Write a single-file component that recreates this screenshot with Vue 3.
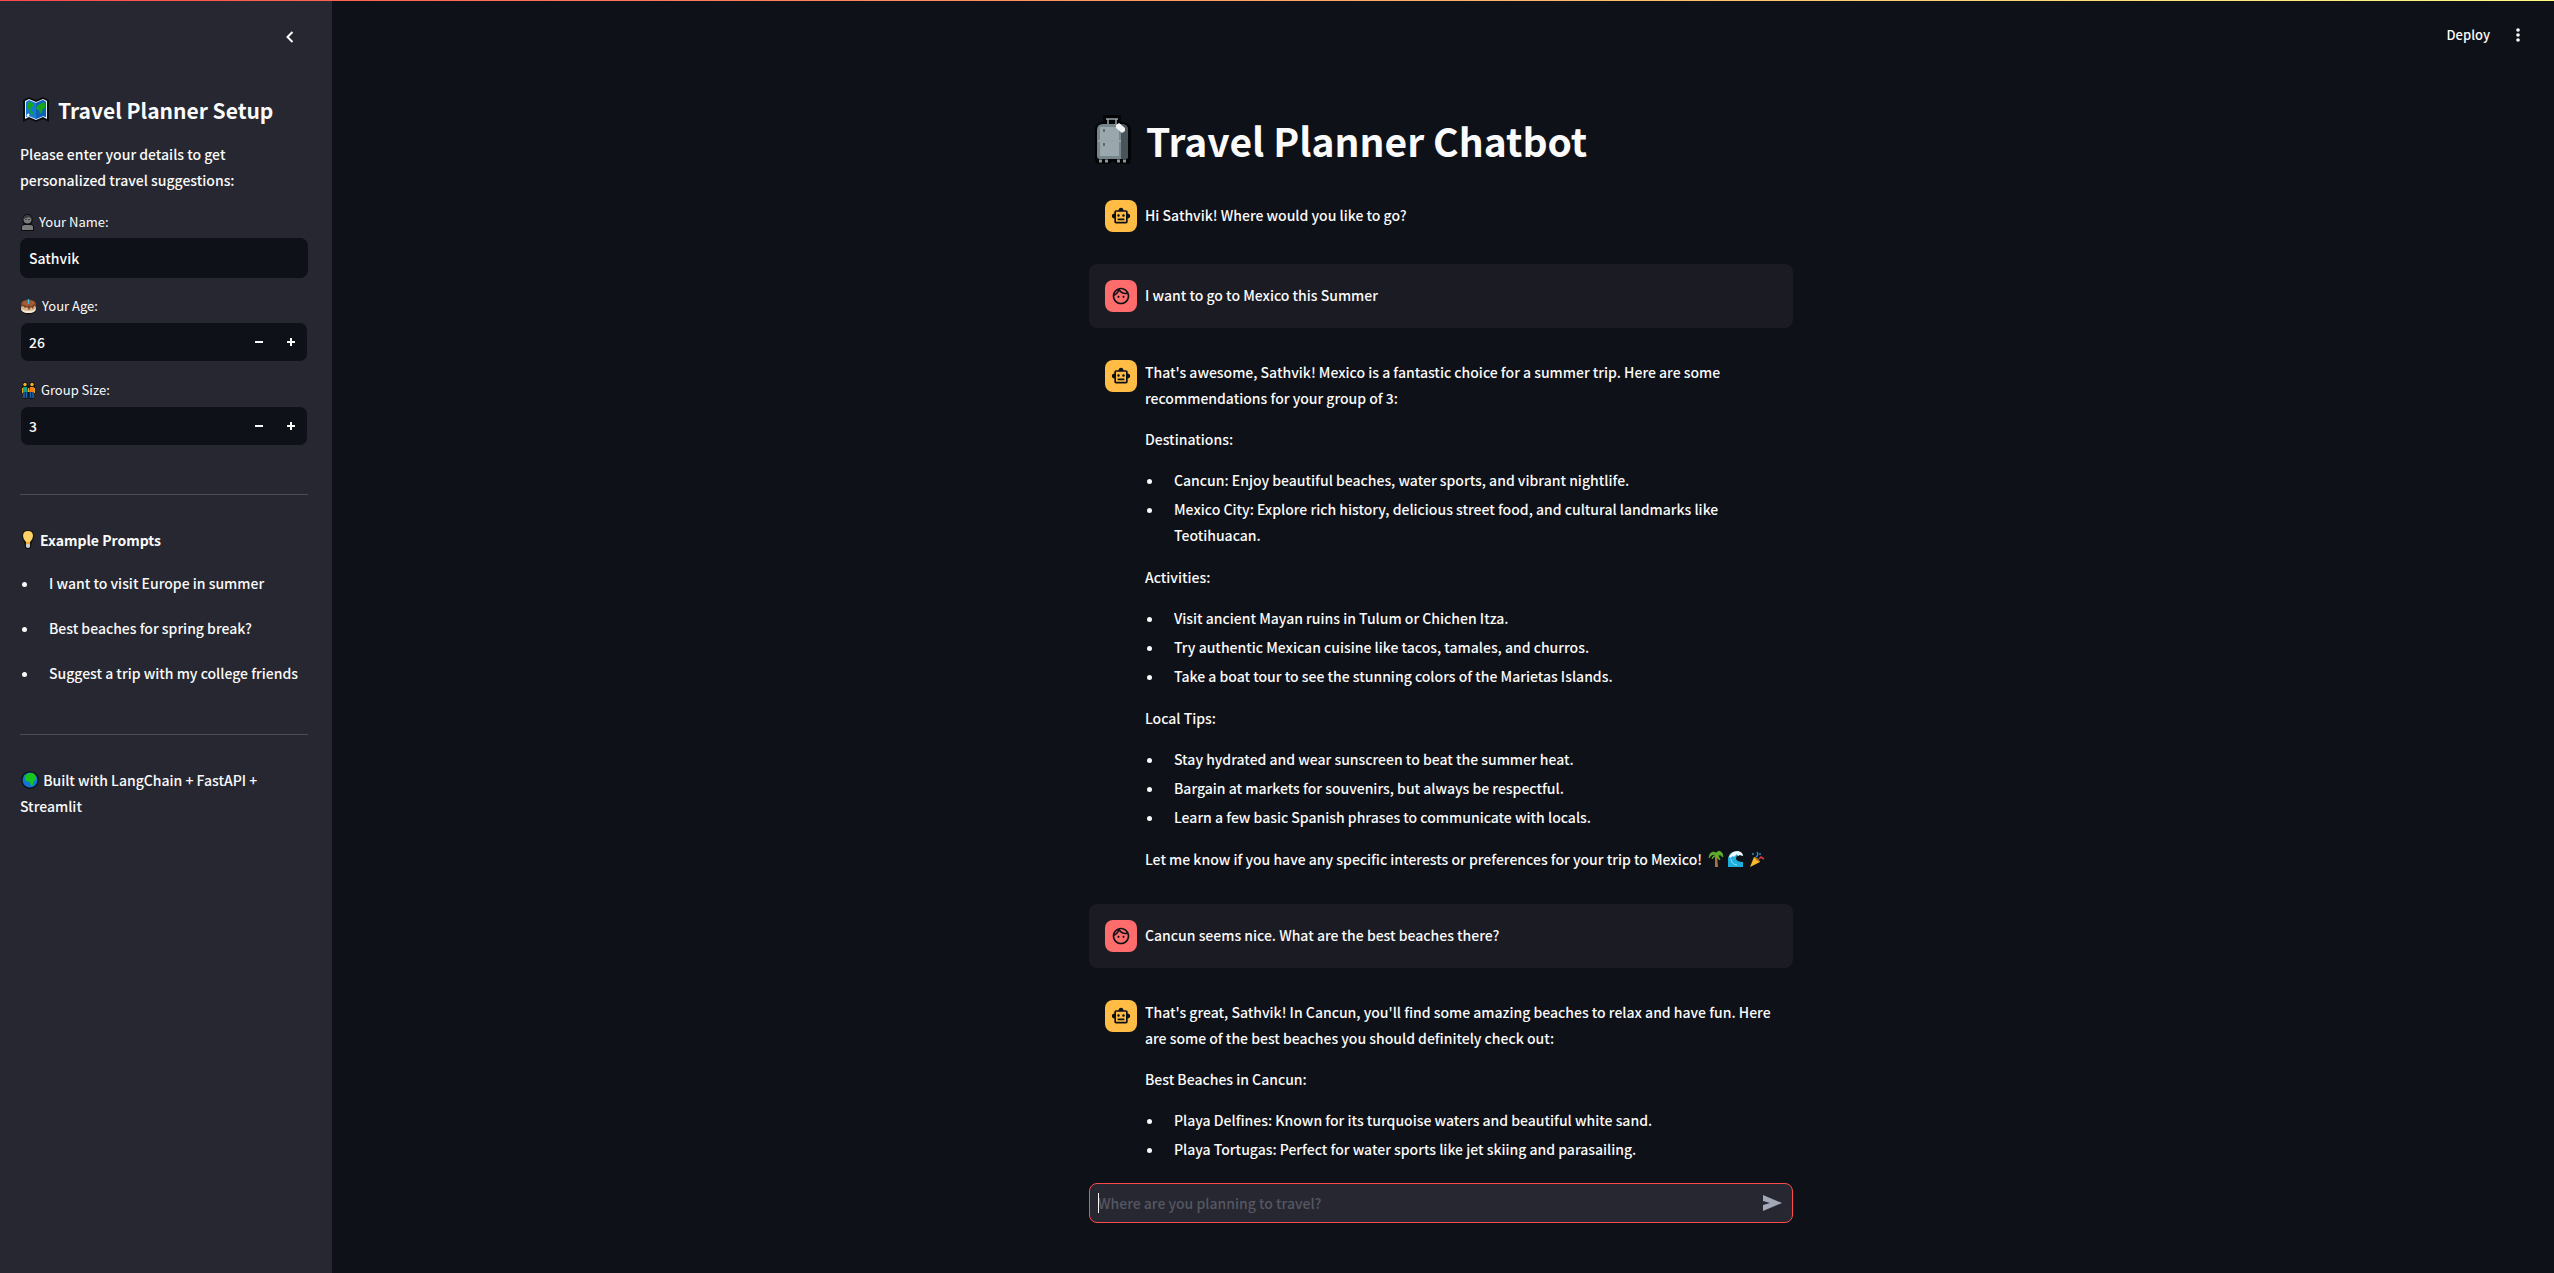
<script setup>
import { ref } from 'vue'

const name = ref('Sathvik')
const age = ref(26)
const group = ref(3)
const prompts = [
  'I want to visit Europe in summer',
  'Best beaches for spring break?',
  'Suggest a trip with my college friends',
]
const messages = [
  { role: 'assistant', blocks: [{ p: 'Hi Sathvik! Where would you like to go?' }] },
  { role: 'user', blocks: [{ p: 'I want to go to Mexico this Summer' }] },
  {
    role: 'assistant',
    blocks: [
      { p: "That's awesome, Sathvik! Mexico is a fantastic choice for a summer trip. Here are some recommendations for your group of 3:" },
      { p: 'Destinations:' },
      { ul: [
        'Cancun: Enjoy beautiful beaches, water sports, and vibrant nightlife.',
        'Mexico City: Explore rich history, delicious street food, and cultural landmarks like Teotihuacan.',
      ] },
      { p: 'Activities:' },
      { ul: [
        'Visit ancient Mayan ruins in Tulum or Chichen Itza.',
        'Try authentic Mexican cuisine like tacos, tamales, and churros.',
        'Take a boat tour to see the stunning colors of the Marietas Islands.',
      ] },
      { p: 'Local Tips:' },
      { ul: [
        'Stay hydrated and wear sunscreen to beat the summer heat.',
        'Bargain at markets for souvenirs, but always be respectful.',
        'Learn a few basic Spanish phrases to communicate with locals.',
      ] },
      { p: 'Let me know if you have any specific interests or preferences for your trip to Mexico!', emoji: true },
    ],
  },
  { role: 'user', blocks: [{ p: 'Cancun seems nice. What are the best beaches there?' }] },
  {
    role: 'assistant',
    blocks: [
      { p: "That's great, Sathvik! In Cancun, you'll find some amazing beaches to relax and have fun. Here are some of the best beaches you should definitely check out:" },
      { p: 'Best Beaches in Cancun:' },
      { ul: [
        'Playa Delfines: Known for its turquoise waters and beautiful white sand.',
        'Playa Tortugas: Perfect for water sports like jet skiing and parasailing.',
      ] },
    ],
  },
]
</script>

<template>
  <div class="app">
    <div class="rainbow"></div>
    <aside class="sidebar">
      <div class="side-head">
        <button class="icon-btn" aria-label="Collapse sidebar">
          <svg width="20" height="20" viewBox="0 0 20 20"><path d="M12.500 5 7.500 10l5 5" fill="none" stroke="#fafafa" stroke-width="2" /></svg>
        </button>
      </div>
      <h2>
        <svg width="28" height="28" viewBox="0 0 28 28">
          <path d="M1 4 7 1l7 3 7-3 6 3v22l-6-3-7 3-7-3-6 3z" fill="#0b0c10" />
          <path d="M3 5 7 3l7 3 7-3 4 2v18l-4-2-7 3-7-3-4 2z" fill="#e4edf5" />
          <path d="M4 6l3-2 7 3 7-3 3 2v15l-3-1-7 3-7-3-3 1z" fill="#1478d4" />
          <path d="M14 7l7-3 3 2v15l-3-1-7 3z" fill="#0d62b8" />
          <path d="M5 7l3-1 4 2v2l-2 1v1l-2 1 1 2 2 1-1 4-1-1-1-4-2-2-1-3zM15 10l3-2 4-2 1 2v4l-2 1-1 3-2 2-1-4-3-1z" fill="#18a51e" />
          <path d="M5 20l2-2" stroke="#fff" stroke-width="2" />
        </svg>
        <span>Travel Planner Setup</span>
      </h2>
      <p class="intro">Please enter your details to get personalized travel suggestions:</p>

      <div class="field">
        <label for="name">
          <svg width="15" height="17" viewBox="0 0 15 17">
            <path d="M1 17v-4q0-2 3-3Q2 8 2.500 4 4 0 7.500 0T12.500 4q.5 4-1.500 6 3 1 3 3v4z" fill="#0b0c10" />
            <path d="M2 16v-3q0-2 3-2h5q3 0 3 2v3z" fill="#7a7a7a" />
            <circle cx="7.500" cy="5.500" r="4" fill="#7a7a7a" />
            <path d="M3.500 5q0-4 4-4t4 4L9 3z" fill="#3a3a3a" />
            <path d="M5.500 5.500h1M8.500 5.500h1" stroke="#111" />
          </svg>
          Your Name:
        </label>
        <div class="box"><input id="name" v-model="name" type="text" /></div>
      </div>
      <div class="field">
        <label for="age">
          <svg width="18" height="17" viewBox="0 0 18 17">
            <ellipse cx="8.500" cy="10.500" rx="8" ry="6" fill="#15120f" />
            <path d="M1 6v5q1 4 7.500 4T16 11V6z" fill="#d9b48b" />
            <path d="M1 11q1 4 7.500 4T16 11q-3 2-7.500 2T1 11" fill="#f2eadb" />
            <path d="M1 6q0-4 7.500-4T16 6v3l-2-1-1 3-2-2-2 3-2-3-2 1-2-2-2 1z" fill="#7a4327" />
            <ellipse cx="8.500" cy="5" rx="6.500" ry="3" fill="#985b36" />
            <path d="M8.500 1v5" stroke="#40b8dd" stroke-width="1.500" />
            <path d="M4 5h1M12 5h1M6 7h1M11 7h1" stroke="#e7563f" />
          </svg>
          Your Age:
        </label>
        <div class="box number">
          <input id="age" v-model="age" type="text" inputmode="numeric" />
          <button aria-label="Decrease age" @click="age--"><svg width="10" height="10" viewBox="0 0 10 10"><path d="M1 5h8" stroke="#fafafa" stroke-width="2" /></svg></button>
          <button aria-label="Increase age" @click="age++"><svg width="10" height="10" viewBox="0 0 10 10"><path d="M1 5h8M5 1v8" stroke="#fafafa" stroke-width="2" /></svg></button>
        </div>
      </div>
      <div class="field">
        <label for="group">
          <svg width="17" height="17" viewBox="0 0 17 17">
            <path d="M3 0h4l1 4h1l1-4h4l1 5 1 6h-2v6H9l-1-2-1 2H3v-6H1l1-6z" fill="#14151b" />
            <circle cx="5" cy="2.500" r="1.700" fill="#f0b323" /><circle cx="12" cy="2.500" r="1.700" fill="#f0b323" />
            <path d="M3 5h4l1 5H3z" fill="#12a087" /><path d="M10 5h4v5H9z" fill="#f47b16" />
            <path d="M2.500 6v5M14.500 6v5M8.500 6v4" stroke="#e5a91f" />
            <path d="M4 10v6M6.500 10v6M10.500 10v6M13 10v6" stroke="#1d65a6" stroke-width="1.600" />
          </svg>
          Group Size:
        </label>
        <div class="box number">
          <input id="group" v-model="group" type="text" inputmode="numeric" />
          <button aria-label="Decrease group size" @click="group--"><svg width="10" height="10" viewBox="0 0 10 10"><path d="M1 5h8" stroke="#fafafa" stroke-width="2" /></svg></button>
          <button aria-label="Increase group size" @click="group++"><svg width="10" height="10" viewBox="0 0 10 10"><path d="M1 5h8M5 1v8" stroke="#fafafa" stroke-width="2" /></svg></button>
        </div>
      </div>

      <hr />
      <p class="examples">
        <svg width="16" height="20" viewBox="0 0 16 20">
          <path d="M8 0Q2 0 2 6q0 3 2 6l1 5q0 2 3 2t3-2l1-5q2-3 2-6 0-6-6-6" fill="#14130f" />
          <path d="M8 1Q3 1 3 6q0 3 3 6v1h4v-1q3-3 3-6 0-5-5-5" fill="#ffd166" />
          <path d="M6 12h4v2H6z" fill="#eba92d" /><path d="M6 14h4v3q-2 2-4 0z" fill="#c8ccd0" />
        </svg>
        <strong>Example Prompts</strong>
      </p>
      <ul class="prompts">
        <li v-for="p in prompts" :key="p"><span>{{ p }}</span></li>
      </ul>
      <hr />
      <p class="built">
        <svg width="20" height="18" viewBox="0 0 20 18">
          <circle cx="10" cy="9" r="8.700" fill="#0c1017" /><circle cx="10" cy="9" r="7.500" fill="#1276d6" />
          <path d="M6 4l3-2 4 0 3 3v4l-2 1-1 4-2 1-1-4-4-1-1-3zM4 5l1-1v2z" fill="#19c41c" />
        </svg>
        Built with LangChain + FastAPI + Streamlit
      </p>
    </aside>

    <main class="main">
      <header class="toolbar">
        <button class="deploy">Deploy</button>
        <button class="icon-btn" aria-label="Main menu">
          <svg width="20" height="20" viewBox="0 0 20 20" fill="#fafafa"><circle cx="10" cy="5" r="1.800" /><circle cx="10" cy="10" r="1.800" /><circle cx="10" cy="15" r="1.800" /></svg>
        </button>
      </header>
      <section class="chat">
        <h1>
          <svg width="38" height="50" viewBox="0 0 38 50">
            <path d="M9 0h18v7h3q7 2 7 8v25l-1 9H23l-4-3-4 3H3l-2-4V15q0-7 7-8h1z" fill="#020304" />
            <path d="M12 4h12M14 4v6M22 4v6" fill="none" stroke="#9aa4a8" stroke-width="1.500" />
            <path d="M3 15q0-6 6-6h18q7 0 7 6v26q0 3-3 3H6q-3 0-3-3z" fill="#77868b" />
            <path d="M27 9q7 0 7 6v26q0 3-3 3h-4z" fill="#48545a" />
            <path d="M6 12h19v13H6zM6 27h19v14H6z" fill="#9aa7ac" />
            <path d="M4 26h23" stroke="#b9c4c8" /><path d="M10 14v3M10 28v3" stroke="#4c5659" stroke-width="1.500" />
            <path d="M22 10l3-2 6 5v3l-3 2-6-5z" fill="#f1f3f3" />
            <path d="M5 46h3M11 46h3M23 46h3M29 46h3" stroke="#8d979b" stroke-width="3" />
          </svg>
          <span>Travel Planner Chatbot</span>
        </h1>
        <article v-for="(m, i) in messages" :key="i" class="message" :class="m.role">
          <div class="avatar">
            <svg v-if="m.role === 'assistant'" width="20" height="20" viewBox="0 0 24 24" fill="#0e1117">
              <path d="M20 9V7c0-1.100-.9-2-2-2h-3c0-1.660-1.340-3-3-3S9 3.340 9 5H6c-1.100 0-2 .9-2 2v2c-1.660 0-3 1.340-3 3s1.340 3 3 3v4c0 1.100.9 2 2 2h12c1.100 0 2-.9 2-2v-4c1.660 0 3-1.340 3-3s-1.340-3-3-3zm-2 10H6V7h12v12zm-9-6c-.83 0-1.500-.67-1.500-1.500S8.170 10 9 10s1.500.67 1.500 1.500S9.830 13 9 13zm7.500-1.500c0 .83-.67 1.500-1.500 1.500s-1.500-.67-1.500-1.500.67-1.500 1.500-1.500 1.500.67 1.500 1.500zM8 15h8v2H8v-2z" />
            </svg>
            <svg v-else width="20" height="20" viewBox="0 0 24 24" fill="#0e1117">
              <path d="M10.250 13c0 .69-.56 1.250-1.250 1.250S7.750 13.690 7.750 13s.56-1.250 1.250-1.250 1.250.56 1.250 1.250zM15 11.750c-.69 0-1.250.56-1.250 1.250s.56 1.250 1.250 1.250 1.250-.56 1.250-1.250-.56-1.250-1.250-1.250zm7 .25c0 5.520-4.480 10-10 10S2 17.520 2 12 6.480 2 12 2s10 4.480 10 10zM10.660 4.120C12.060 6.440 14.600 8 17.500 8c.46 0 .91-.05 1.340-.12C17.440 5.560 14.900 4 12 4c-.46 0-.91.05-1.340.12zM4.420 9.470c1.710-.97 3.030-2.550 3.660-4.440C6.370 6 5.050 7.580 4.420 9.470zM20 12c0-.78-.12-1.530-.33-2.240-.7.150-1.420.24-2.170.24-3.130 0-5.920-1.440-7.760-3.690C8.690 8.870 6.600 10.880 4 11.860c.01.040 0 .090 0 .140 0 4.410 3.590 8 8 8s8-3.590 8-8z" />
            </svg>
          </div>
          <div class="body">
            <template v-for="(b, j) in m.blocks" :key="j">
              <ul v-if="b.ul"><li v-for="t in b.ul" :key="t"><span>{{ t }}</span></li></ul>
              <p v-else>{{ b.p }}<span v-if="b.emoji" class="emojis">
                <svg width="16" height="18" viewBox="0 0 16 18">
                  <path d="M7 6h2l1 11H7z" fill="#a8743f" />
                  <path d="M8 5Q4 3 1 8q0-5 4-6l3 1 3-2q4 1 4 6-3-3-5-2l2 5Q8 8 8 5L4 9q0-3 4-4" fill="#5fae2b" stroke="#5fae2b" stroke-width=".8" />
                </svg>
                <svg width="18" height="18" viewBox="0 0 18 18">
                  <path d="M1 17V8q1-6 9-7 5 1 6 5l-3-1q-4 0-4 4 1 3 7 3v5z" fill="#1eaede" />
                  <path d="M2 7q2-6 9-6 5 1 5 5l-3-1-2 1-1-2-3 3-1-1-3 2z" fill="#f2f8fb" />
                  <path d="M4 9q0 5 6 6" fill="none" stroke="#8ddcf3" />
                </svg>
                <svg width="18" height="18" viewBox="0 0 18 18">
                  <path d="M2 17 6 7q4 1 6 5z" fill="#f9b928" /><path d="M6 7q3 0 6 5-4-1-6-5" fill="#b9791c" />
                  <path d="M11 9l2-2 3 2" fill="none" stroke="#d63b35" stroke-width="1.600" />
                  <path d="M8 7q3-2 1-5M4 4h2M12 3v2" fill="none" stroke="#2490d2" stroke-width="1.400" />
                </svg>
              </span></p>
            </template>
          </div>
        </article>
      </section>
      <footer class="composer">
        <div class="composer-box">
          <input type="text" aria-label="Chat message" placeholder="Where are you planning to travel?" />
          <span class="caret"></span>
          <button aria-label="Send message">
            <svg width="24" height="24" viewBox="0 0 24 24"><path d="M3 4l19 8-19 8v-6l7-2-7-2z" fill="#a3a8b8" /></svg>
          </button>
        </div>
      </footer>
    </main>
  </div>
</template>

<style>
body {
  margin: 0;
  background: #0e1117;
}
</style>

<style scoped>
.app {
  display: flex;
  position: relative;
  height: 100vh;
  overflow: hidden;
  color: #fafafa;
  background: #0e1117;
  font: 500 14px/26px "Source Sans Pro", "Noto Sans CJK SC", sans-serif;
}
* { box-sizing: border-box; }
h1, h2, p, ul { margin: 0; padding: 0; }
svg { display: block; flex: none; }
button {
  display: flex;
  align-items: center;
  justify-content: center;
  padding: 0;
  border: 0;
  background: none;
  color: inherit;
  font: inherit;
}
input {
  flex: 1;
  min-width: 0;
  padding: 0;
  border: 0;
  outline: 0;
  background: none;
  color: inherit;
  font: inherit;
}
.rainbow {
  position: absolute;
  inset: 0 0 auto;
  height: 1px;
  background: linear-gradient(90deg, #ff4b4b, #fffd80);
}
.sidebar {
  flex: none;
  width: 332px;
  padding: 0 24px 0 20px;
  background: #262730;
}
.side-head {
  display: flex;
  justify-content: flex-end;
  align-items: center;
  height: 74px;
  padding-right: 8px;
}
h2 {
  display: flex;
  align-items: center;
  gap: 8px;
  margin: 21px 0 16px;
  padding-left: 2px;
  font-size: 21px;
  line-height: 30px;
  font-weight: 700;
}
.intro {
  margin-bottom: 17px;
  padding-right: 16px;
}
.field { margin-bottom: 16px; }
label {
  display: flex;
  align-items: center;
  gap: 4px;
  height: 24px;
  margin-bottom: 4px;
  font-size: 13px;
  font-weight: 400;
}
.box {
  display: flex;
  height: 40px;
  padding-left: 9px;
  border-radius: 8px;
  background: #0e1117;
}
.number {
  border: 1px solid #262730;
  padding-left: 8px;
}
.number button { width: 32px; }
hr {
  height: 1px;
  margin: 48px 0 32px;
  border: 0;
  background: #4c4d55;
}
.examples {
  display: flex;
  align-items: center;
  gap: 4px;
}
.examples strong { font-weight: 700; }
.prompts { margin-top: 17px; }
.prompts li { margin-bottom: 19px; }
li { display: flex; }
li::before {
  content: "";
  flex: none;
  width: 5px;
  height: 5px;
  margin: 12px 22px 0 2px;
  border-radius: 50%;
  background: #fafafa;
}
.built svg { display: inline-block; vertical-align: -3px; }

.main {
  display: flex;
  flex: 1;
  flex-direction: column;
  min-width: 0;
  padding-right: 4px;
}
.toolbar {
  display: flex;
  flex: none;
  align-items: center;
  justify-content: flex-end;
  gap: 18px;
  height: 70px;
  padding-right: 22px;
  font-size: 13px;
}
.chat {
  display: flex;
  flex: 1;
  flex-direction: column;
  gap: 16px;
  width: 100%;
  max-width: 704px;
  min-height: 0;
  margin: 0 auto;
  padding-top: 42px;
  overflow: hidden;
}
h1 {
  display: flex;
  flex: none;
  align-items: center;
  gap: 14px;
  height: 56px;
  padding-left: 5px;
  font-size: 39px;
  line-height: 56px;
  font-weight: 700;
}
.message {
  display: flex;
  flex: none;
  gap: 8px;
  padding: 16px;
  border-radius: 8px;
}
.message.user { background: #1a1b23; }
.avatar {
  display: flex;
  flex: none;
  align-items: center;
  justify-content: center;
  width: 32px;
  height: 32px;
  border-radius: 8px;
  background: #ffbd45;
}
.user .avatar { background: #ff6c6c; }
.body {
  flex: 1;
  margin-top: -1px;
}
.body p { margin-bottom: 15px; }
.body ul { margin-bottom: 16px; }
.body li + li { margin-top: 3px; }
.body > :last-child { margin-bottom: 0; }
.body > p:only-child { line-height: 32px; }
.emojis { display: inline-flex; gap: 3px; margin-left: 6px; vertical-align: -3px; }
.composer {
  flex: none;
  width: 100%;
  max-width: 704px;
  margin: 0 auto;
  padding: 16px 0 50px;
}
.composer-box {
  display: flex;
  position: relative;
  height: 40px;
  padding-left: 8px;
  border: 1px solid #ff4b4b;
  border-radius: 8px;
  background: #262730;
}
.composer-box input::placeholder { color: #555762; opacity: 1; }
.composer-box button { width: 40px; }
.caret {
  position: absolute;
  top: 9px;
  left: 8px;
  width: 1px;
  height: 20px;
  background: #fafafa;
}
</style>
